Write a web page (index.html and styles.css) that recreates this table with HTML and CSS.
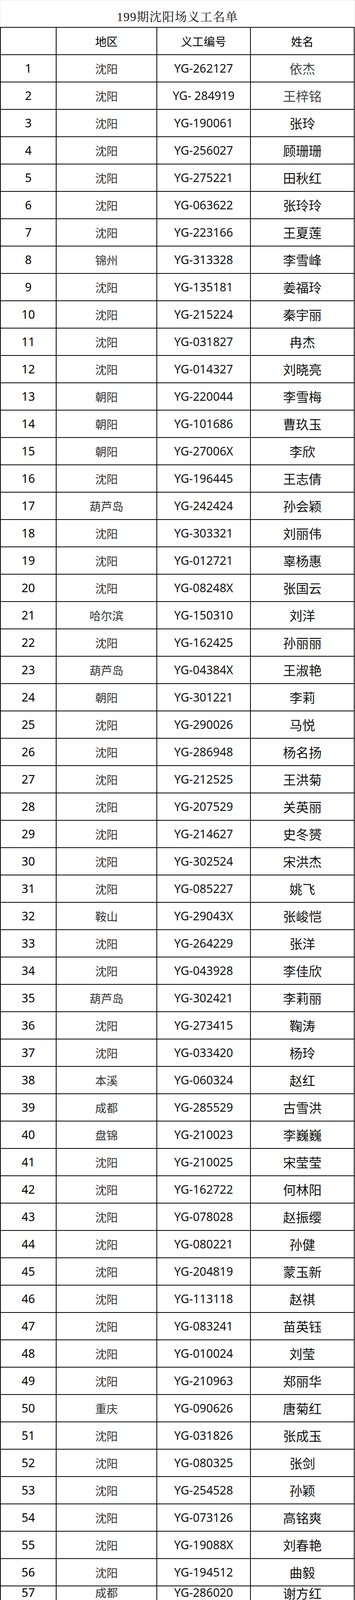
FILE: index.html
```html
<!DOCTYPE html>
<html lang="zh-CN">
<head>
<meta charset="utf-8">
<title>199期沈阳场义工名单</title>
<link rel="stylesheet" href="styles.css">
</head>
<body>
<div class="page">
  <div class="title">199期沈阳场义工名单</div>
  <div class="sheet">
    <div class="row head"><div class="cell num"></div><div class="cell area">地区</div><div class="cell code">义工编号</div><div class="cell name">姓名</div></div>
    <div class="row"><div class="cell num">1</div><div class="cell area">沈阳</div><div class="cell code">YG-262127</div><div class="cell name soft">依杰</div></div>
    <div class="row"><div class="cell num">2</div><div class="cell area">沈阳</div><div class="cell code">YG- 284919</div><div class="cell name soft">王梓铭</div></div>
    <div class="row"><div class="cell num">3</div><div class="cell area">沈阳</div><div class="cell code">YG-190061</div><div class="cell name">张玲</div></div>
    <div class="row"><div class="cell num">4</div><div class="cell area">沈阳</div><div class="cell code">YG-256027</div><div class="cell name">顾珊珊</div></div>
    <div class="row"><div class="cell num">5</div><div class="cell area">沈阳</div><div class="cell code">YG-275221</div><div class="cell name">田秋红</div></div>
    <div class="row"><div class="cell num">6</div><div class="cell area">沈阳</div><div class="cell code">YG-063622</div><div class="cell name">张玲玲</div></div>
    <div class="row"><div class="cell num">7</div><div class="cell area">沈阳</div><div class="cell code">YG-223166</div><div class="cell name">王夏莲</div></div>
    <div class="row"><div class="cell num">8</div><div class="cell area">锦州</div><div class="cell code">YG-313328</div><div class="cell name">李雪峰</div></div>
    <div class="row"><div class="cell num">9</div><div class="cell area">沈阳</div><div class="cell code">YG-135181</div><div class="cell name">姜福玲</div></div>
    <div class="row"><div class="cell num">10</div><div class="cell area">沈阳</div><div class="cell code">YG-215224</div><div class="cell name">秦宇丽</div></div>
    <div class="row"><div class="cell num">11</div><div class="cell area">沈阳</div><div class="cell code">YG-031827</div><div class="cell name">冉杰</div></div>
    <div class="row"><div class="cell num">12</div><div class="cell area">沈阳</div><div class="cell code">YG-014327</div><div class="cell name">刘晓亮</div></div>
    <div class="row"><div class="cell num">13</div><div class="cell area">朝阳</div><div class="cell code">YG-220044</div><div class="cell name">李雪梅</div></div>
    <div class="row"><div class="cell num">14</div><div class="cell area">朝阳</div><div class="cell code">YG-101686</div><div class="cell name">曹玖玉</div></div>
    <div class="row"><div class="cell num">15</div><div class="cell area">朝阳</div><div class="cell code">YG-27006X</div><div class="cell name">李欣</div></div>
    <div class="row"><div class="cell num">16</div><div class="cell area">沈阳</div><div class="cell code">YG-196445</div><div class="cell name">王志倩</div></div>
    <div class="row"><div class="cell num">17</div><div class="cell area">葫芦岛</div><div class="cell code">YG-242424</div><div class="cell name">孙会颖</div></div>
    <div class="row"><div class="cell num">18</div><div class="cell area">沈阳</div><div class="cell code">YG-303321</div><div class="cell name">刘丽伟</div></div>
    <div class="row"><div class="cell num">19</div><div class="cell area">沈阳</div><div class="cell code">YG-012721</div><div class="cell name">辜杨惠</div></div>
    <div class="row"><div class="cell num">20</div><div class="cell area">沈阳</div><div class="cell code">YG-08248X</div><div class="cell name">张国云</div></div>
    <div class="row"><div class="cell num">21</div><div class="cell area">哈尔滨</div><div class="cell code">YG-150310</div><div class="cell name">刘洋</div></div>
    <div class="row"><div class="cell num">22</div><div class="cell area">沈阳</div><div class="cell code">YG-162425</div><div class="cell name">孙丽丽</div></div>
    <div class="row"><div class="cell num">23</div><div class="cell area">葫芦岛</div><div class="cell code">YG-04384X</div><div class="cell name">王淑艳</div></div>
    <div class="row"><div class="cell num">24</div><div class="cell area">朝阳</div><div class="cell code">YG-301221</div><div class="cell name">李莉</div></div>
    <div class="row"><div class="cell num">25</div><div class="cell area">沈阳</div><div class="cell code">YG-290026</div><div class="cell name">马悦</div></div>
    <div class="row"><div class="cell num">26</div><div class="cell area">沈阳</div><div class="cell code">YG-286948</div><div class="cell name">杨名扬</div></div>
    <div class="row"><div class="cell num">27</div><div class="cell area">沈阳</div><div class="cell code">YG-212525</div><div class="cell name">王洪菊</div></div>
    <div class="row"><div class="cell num">28</div><div class="cell area">沈阳</div><div class="cell code">YG-207529</div><div class="cell name">关英丽</div></div>
    <div class="row"><div class="cell num">29</div><div class="cell area">沈阳</div><div class="cell code">YG-214627</div><div class="cell name">史冬赟</div></div>
    <div class="row"><div class="cell num">30</div><div class="cell area">沈阳</div><div class="cell code">YG-302524</div><div class="cell name">宋洪杰</div></div>
    <div class="row"><div class="cell num">31</div><div class="cell area">沈阳</div><div class="cell code">YG-085227</div><div class="cell name">姚飞</div></div>
    <div class="row"><div class="cell num">32</div><div class="cell area">鞍山</div><div class="cell code">YG-29043X</div><div class="cell name">张峻恺</div></div>
    <div class="row"><div class="cell num">33</div><div class="cell area">沈阳</div><div class="cell code">YG-264229</div><div class="cell name">张洋</div></div>
    <div class="row"><div class="cell num">34</div><div class="cell area">沈阳</div><div class="cell code">YG-043928</div><div class="cell name">李佳欣</div></div>
    <div class="row"><div class="cell num">35</div><div class="cell area">葫芦岛</div><div class="cell code">YG-302421</div><div class="cell name">李莉丽</div></div>
    <div class="row"><div class="cell num">36</div><div class="cell area">沈阳</div><div class="cell code">YG-273415</div><div class="cell name">鞠涛</div></div>
    <div class="row"><div class="cell num">37</div><div class="cell area">沈阳</div><div class="cell code">YG-033420</div><div class="cell name">杨玲</div></div>
    <div class="row"><div class="cell num">38</div><div class="cell area">本溪</div><div class="cell code">YG-060324</div><div class="cell name">赵红</div></div>
    <div class="row"><div class="cell num">39</div><div class="cell area">成都</div><div class="cell code">YG-285529</div><div class="cell name">古雪洪</div></div>
    <div class="row"><div class="cell num">40</div><div class="cell area">盘锦</div><div class="cell code">YG-210023</div><div class="cell name">李巍巍</div></div>
    <div class="row"><div class="cell num">41</div><div class="cell area">沈阳</div><div class="cell code">YG-210025</div><div class="cell name">宋莹莹</div></div>
    <div class="row"><div class="cell num">42</div><div class="cell area">沈阳</div><div class="cell code">YG-162722</div><div class="cell name">何林阳</div></div>
    <div class="row"><div class="cell num">43</div><div class="cell area">沈阳</div><div class="cell code">YG-078028</div><div class="cell name">赵振缨</div></div>
    <div class="row"><div class="cell num">44</div><div class="cell area">沈阳</div><div class="cell code">YG-080221</div><div class="cell name">孙健</div></div>
    <div class="row"><div class="cell num">45</div><div class="cell area">沈阳</div><div class="cell code">YG-204819</div><div class="cell name">蒙玉新</div></div>
    <div class="row"><div class="cell num">46</div><div class="cell area">沈阳</div><div class="cell code">YG-113118</div><div class="cell name">赵祺</div></div>
    <div class="row"><div class="cell num">47</div><div class="cell area">沈阳</div><div class="cell code">YG-083241</div><div class="cell name">苗英钰</div></div>
    <div class="row"><div class="cell num">48</div><div class="cell area">沈阳</div><div class="cell code">YG-010024</div><div class="cell name">刘莹</div></div>
    <div class="row"><div class="cell num">49</div><div class="cell area">沈阳</div><div class="cell code">YG-210963</div><div class="cell name">郑丽华</div></div>
    <div class="row"><div class="cell num">50</div><div class="cell area">重庆</div><div class="cell code">YG-090626</div><div class="cell name">唐菊红</div></div>
    <div class="row"><div class="cell num">51</div><div class="cell area">沈阳</div><div class="cell code">YG-031826</div><div class="cell name">张成玉</div></div>
    <div class="row"><div class="cell num">52</div><div class="cell area">沈阳</div><div class="cell code">YG-080325</div><div class="cell name">张剑</div></div>
    <div class="row"><div class="cell num">53</div><div class="cell area">沈阳</div><div class="cell code">YG-254528</div><div class="cell name">孙颖</div></div>
    <div class="row"><div class="cell num">54</div><div class="cell area">沈阳</div><div class="cell code">YG-073126</div><div class="cell name">高铭爽</div></div>
    <div class="row"><div class="cell num">55</div><div class="cell area">沈阳</div><div class="cell code">YG-19088X</div><div class="cell name">刘春艳</div></div>
    <div class="row"><div class="cell num">56</div><div class="cell area">沈阳</div><div class="cell code">YG-194512</div><div class="cell name">曲毅</div></div>
    <div class="row last"><div class="cell num">57</div><div class="cell area">成都</div><div class="cell code">YG-286020</div><div class="cell name">谢方红</div></div>
  </div>
</div>
</body>
</html>
```
FILE: styles.css
```css
html, body {
  margin: 0;
  padding: 0;
  background: #ffffff;
}

.page {
  width: 910px;
}

.title {
  box-sizing: border-box;
  width: 910px;
  height: 69px;
  border: 1px solid #e6e6e6;
  border-bottom: none;
  display: flex;
  align-items: center;
  justify-content: center;
  padding-top: 10px;
  font-family: "Liberation Serif", "Noto Serif CJK SC", "Noto Sans CJK SC", serif;
  font-size: 31px;
  letter-spacing: 1.5px;
  color: #111111;
}

.sheet {
  width: 909px;
  box-sizing: border-box;
  border-left: 2px solid #000;
  border-top: 2px solid #000;
  font-family: "Noto Sans", "Noto Sans CJK SC", sans-serif;
  font-size: 30px;
  color: #000;
}

.row {
  display: grid;
  grid-template-columns: 143px 258px 240px 266px;
}

.cell {
  box-sizing: border-box;
  height: 70px;
  border-right: 2px solid #000;
  border-bottom: 2px solid #000;
  display: flex;
  align-items: center;
  justify-content: center;
  white-space: pre;
  line-height: 1;
}

.row.last .cell {
  align-items: flex-start;
  padding-top: 1px;
}

.area {
  color: #333333;
  font-family: "Noto Sans CJK SC", sans-serif;
  font-size: 29px;
}

.head .cell {
  color: #000;
  font-family: "Noto Sans CJK SC", sans-serif;
  font-size: 29px;
}

.code {
  color: #111111;
}

.name {
  font-family: "Noto Sans CJK SC", sans-serif;
  font-size: 33px;
  color: #111111;
}

.name.soft {
  color: #444444;
}
```
